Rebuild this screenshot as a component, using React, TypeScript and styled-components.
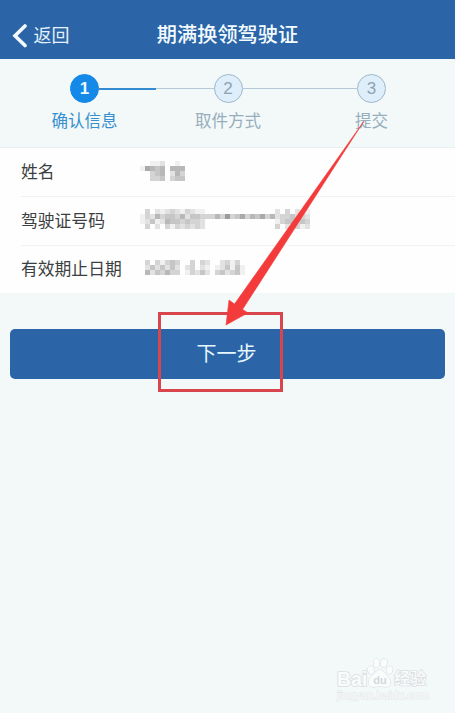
import React from 'react';
import styled, { createGlobalStyle } from 'styled-components';

const GlobalStyle = createGlobalStyle`
    * {
        box-sizing: border-box;
    }
    body {
        margin: 0;
        background: #f3f8f9;
        font-family: 'Liberation Sans', 'Noto Sans CJK SC', sans-serif;
    }
`;

const Page = styled.div`
    position: relative;
    display: flex;
    flex-direction: column;
    height: 713px;
    overflow: hidden;
    background: #f3f8f9;
`;

const Header = styled.header`
    display: grid;
    grid-template-columns: 1fr auto 1fr;
    align-items: center;
    height: 59px;
    padding: 11px 12px 0;
    color: #f4fbff;
    background: #2b65a7;
`;

const BackButton = styled.button`
    display: flex;
    align-items: center;
    gap: 5.5px;
    padding: 1px 0 0;
    border: 0;
    background: none;
    color: #e4f2fd;
    font-family: inherit;
    font-size: 18px;
    line-height: 24px;
`;

const Title = styled.h1`
    margin: 0;
    font-size: 20.2px;
    font-weight: 500;
    line-height: 24px;
`;

const Steps = styled.ol`
    display: grid;
    grid-template-columns: repeat(3, 143.5px);
    justify-content: center;
    height: 89px;
    margin: 0;
    padding: 15px 0 0 1px;
    border-bottom: 1px solid #eceff1;
    list-style: none;
`;

const StepItem = styled.li<{ $active?: boolean }>`
    display: flex;
    flex-direction: column;
    align-items: center;
    color: ${(p) => (p.$active ? '#3590cf' : '#97aebd')};
    font-size: 16.5px;
    line-height: 24px;
`;

const StepTrack = styled.div`
    display: flex;
    align-items: center;
    width: 100%;
    height: 29px;
    margin-bottom: 6px;
`;

const StepLine = styled.span<{ $color: string; $thick?: boolean }>`
    flex: 1;
    height: ${(p) => (p.$thick ? 2 : 1)}px;
    background: ${(p) => p.$color};
`;

const StepCircle = styled.span<{ $active?: boolean }>`
    display: flex;
    align-items: center;
    justify-content: center;
    width: 29px;
    height: 29px;
    border: ${(p) => (p.$active ? '1px solid #1489e8' : '1.5px solid #9fb7c8')};
    border-radius: 50%;
    background: ${(p) => (p.$active ? '#1489e8' : '#deeefb')};
    color: ${(p) => (p.$active ? '#eef9ff' : '#8ba3b5')};
    font-size: 17px;
    font-weight: ${(p) => (p.$active ? 700 : 400)};
`;

const InfoList = styled.dl`
    height: 145px;
    margin: 0;
    padding-left: 21px;
    background: #fefefe;
`;

const InfoRow = styled.div`
    display: flex;
    align-items: center;
    height: 48.33px;
    color: #3c3f41;

    & + & {
        border-top: 1px solid #f1f2f3;
    }
`;

const InfoLabel = styled.dt`
    width: 119px;
    padding-top: 2px;
    font-size: 16.8px;
    line-height: 24px;
`;

const InfoValue = styled.dd`
    margin: 0;
`;

const Mosaic = styled.div<{ $cols: number }>`
    display: grid;
    grid-template-columns: repeat(${(p) => p.$cols}, 5px);
    grid-auto-rows: 5px;
    margin-top: -3px;
`;

const MosaicCell = styled.i<{ $level: number }>`
    background: rgba(0, 0, 0, ${(p) => p.$level * 0.055});
`;

const Actions = styled.div`
    padding: 36px 10px 0;
`;

const NextButton = styled.button`
    display: block;
    width: 100%;
    height: 50px;
    padding: 0 2px 0 0;
    border: 0;
    border-radius: 5px;
    background: #2b65a7;
    color: #e6f6fd;
    font-family: inherit;
    font-size: 20px;
    line-height: 50px;
`;

const Highlight = styled.div`
    position: absolute;
    left: 158px;
    top: 312px;
    width: 125px;
    height: 80px;
    border: 3px solid #d9454c;
`;

const Arrow = styled.svg`
    position: absolute;
    left: 0;
    top: 0;
    pointer-events: none;
`;

const Watermark = styled.div`
    position: absolute;
    left: 337px;
    top: 658px;
    width: 92px;
    color: #fafcfc;
    paint-order: stroke fill;
    -webkit-text-stroke: 1.6px #dcdfe2;
`;

const WatermarkBrand = styled.div`
    display: flex;
    align-items: flex-end;
    height: 31px;
    font-size: 19.5px;
    font-weight: 700;
    line-height: 20px;
`;

const WatermarkPaw = styled.svg`
    flex: none;
    width: 27px;
    height: 31px;
`;

const WatermarkSuffix = styled.span`
    font-size: 16px;
    font-weight: 500;
`;

const WatermarkUrl = styled.div`
    font-size: 11.4px;
    line-height: 13px;
    -webkit-text-stroke: 1px #e2e6e8;
`;

const STEPS = [
    { label: '确认信息', before: 'transparent', after: '#348bd1' },
    { label: '取件方式', before: '#b5c9d8', after: '#b5c9d8' },
    { label: '提交', before: '#b5c9d8', after: 'transparent' },
];

// one digit per 5px cell, 0 is clear
const ROWS = [
    {
        label: '姓名',
        mask: ['001120010', '165450555', '003450253', '003340344'],
    },
    {
        label: '驾驶证号码',
        mask: [
            '0302123213211000000000000002030201',
            '1325344352443335373463546352334232',
            '1241254434332000000000000001344343',
            '0302031323232000000000000003020312',
        ],
    },
    {
        label: '有效期止日期',
        mask: ['030313430030320023130', '024242420230210124141', '052435330132420342341'],
    },
];

function Masked({ rows }: { rows: string[] }) {
    return (
        <Mosaic $cols={rows[0].length}>
            {rows
                .join('')
                .split('')
                .map((level, index) => (
                    <MosaicCell key={index} $level={Number(level)} />
                ))}
        </Mosaic>
    );
}

function App() {
    return (
        <Page>
            <GlobalStyle />
            <Header>
                <BackButton>
                    <svg width="16" height="24" viewBox="0 0 16 24" fill="none">
                        <path d="M13 2 3 11.7l10 9.8" stroke="#f4fbff" strokeWidth="3.6" strokeLinecap="round" />
                    </svg>
                    返回
                </BackButton>
                <Title>期满换领驾驶证</Title>
            </Header>
            <Steps>
                {STEPS.map((step, index) => (
                    <StepItem key={step.label} $active={index === 0}>
                        <StepTrack>
                            <StepLine $color={step.before} />
                            <StepCircle $active={index === 0}>{index + 1}</StepCircle>
                            <StepLine $color={step.after} $thick={index === 0} />
                        </StepTrack>
                        {step.label}
                    </StepItem>
                ))}
            </Steps>
            <InfoList>
                {ROWS.map((row) => (
                    <InfoRow key={row.label}>
                        <InfoLabel>{row.label}</InfoLabel>
                        <InfoValue>
                            <Masked rows={row.mask} />
                        </InfoValue>
                    </InfoRow>
                ))}
            </InfoList>
            <Actions>
                <NextButton>下一步</NextButton>
            </Actions>
            <Highlight />
            <Arrow width="455" height="400" viewBox="0 0 455 400">
                <path
                    d="M364 121 234.5 304 229 300 226 325 248 312.8 242.5 309.5Z"
                    fill="#f43b3b"
                    stroke="#f43b3b"
                    strokeWidth="0.6"
                />
            </Arrow>
            <Watermark>
                <WatermarkBrand>
                    Bai
                    <WatermarkPaw viewBox="0 0 27 31">
                        <g fill="#fafcfc" stroke="#d8dcdf" strokeWidth="1">
                            <ellipse cx="4" cy="12" rx="3" ry="4" transform="rotate(-15 4 12)" />
                            <ellipse cx="9.5" cy="5" rx="3" ry="4.2" />
                            <ellipse cx="17" cy="5" rx="3" ry="4.2" transform="rotate(10 17 5)" />
                            <ellipse cx="22.5" cy="12" rx="3" ry="4" transform="rotate(15 22.5 12)" />
                            <path d="M13 12c4 0 5 4 8 7 4 4 3 10-2 10-3 0-4-1-6-1s-4 1-7 1c-5 0-6-6-2-10 3-3 5-7 9-7Z" />
                        </g>
                        <text x="13" y="26" textAnchor="middle" fontSize="11" fontWeight="700" fill="#d3d8db" strokeWidth="0">
                            du
                        </text>
                    </WatermarkPaw>
                    <WatermarkSuffix>经验</WatermarkSuffix>
                </WatermarkBrand>
                <WatermarkUrl>jingyan.baidu.com</WatermarkUrl>
            </Watermark>
        </Page>
    );
}

export default App;
